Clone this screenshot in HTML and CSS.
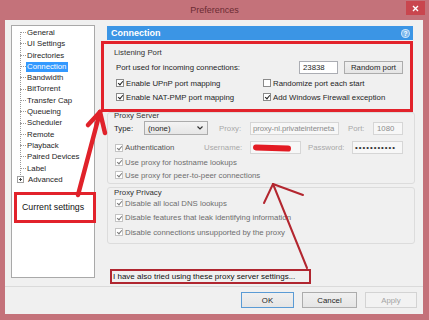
FILE: index.html
```html
<!DOCTYPE html>
<html lang="en">
<head>
    <meta charset="UTF-8">
    <title>Preferences</title>
    <link rel="stylesheet" href="styles.css">
</head>
<body>
    <div class="window">
        <div class="titlebar">
            <span></span>
            <span class="title">Preferences</span>
            <span class="close">
                <svg width="7" height="7" viewBox="0 0 7 7"><path d="M1 1L6 6M6 1L1 6" stroke="#fff" stroke-width="1.4"/></svg>
            </span>
        </div>

        <div class="client">
            <div class="top">
                <div class="sidebar">
                    <ul class="tree">
                        <li>General</li>
                        <li>UI Settings</li>
                        <li>Directories</li>
                        <li class="selected"><span>Connection</span></li>
                        <li>Bandwidth</li>
                        <li>BitTorrent</li>
                        <li>Transfer Cap</li>
                        <li>Queueing</li>
                        <li>Scheduler</li>
                        <li>Remote</li>
                        <li>Playback</li>
                        <li>Paired Devices</li>
                        <li>Label</li>
                        <li class="expand"><i class="plus"></i>Advanced</li>
                    </ul>
                    <div class="note-big">Current settings</div>
                </div>

                <div class="main">
                    <div class="panel-head">
                        <span>Connection</span>
                        <span class="help">?</span>
                    </div>

                    <div class="highlight">
                        <div class="group-label">Listening Port</div>
                        <div class="port-row">
                            <span class="port-text">Port used for incoming connections:</span>
                            <span class="field port">23838</span>
                            <span class="btn random">Random port</span>
                        </div>
                        <div class="check-grid">
                            <span class="check on"><i class="box"></i>Enable UPnP port mapping</span>
                            <span class="check"><i class="box"></i>Randomize port each start</span>
                            <span class="check on"><i class="box"></i>Enable NAT-PMP port mapping</span>
                            <span class="check on"><i class="box"></i>Add Windows Firewall exception</span>
                        </div>
                    </div>

                    <div class="group proxy">
                        <div class="group-label">Proxy Server</div>
                        <div class="row type-row">
                            <span class="lbl type">Type:</span>
                            <span class="select">(none)
                                <svg width="6" height="4" viewBox="0 0 6 4"><path d="M0.5 0.5L3 3L5.5 0.5" fill="none" stroke="#333" stroke-width="1.2"/></svg>
                            </span>
                            <span class="lbl dim proxy-lbl">Proxy:</span>
                            <span class="field off host">proxy-nl.privateinterneta</span>
                            <span class="lbl dim port-lbl">Port:</span>
                            <span class="field off num">1080</span>
                        </div>
                        <div class="row auth-row">
                            <span class="check on off auth"><i class="box"></i>Authentication</span>
                            <span class="lbl dim user-lbl">Username:</span>
                            <span class="field off user"><i class="scribble"></i></span>
                            <span class="lbl dim pass-lbl">Password:</span>
                            <span class="field off pass">•••••••••••</span>
                        </div>
                        <div class="row"><span class="check on off"><i class="box"></i>Use proxy for hostname lookups</span></div>
                        <div class="row last"><span class="check on off"><i class="box"></i>Use proxy for peer-to-peer connections</span></div>
                    </div>

                    <div class="group privacy">
                        <div class="group-label">Proxy Privacy</div>
                        <div class="privacy-list">
                            <span class="check on off"><i class="box"></i>Disable all local DNS lookups</span>
                            <span class="check on off"><i class="box"></i>Disable features that leak identifying information</span>
                            <span class="check on off"><i class="box"></i>Disable connections unsupported by the proxy</span>
                        </div>
                    </div>

                    <div class="note-small">I have also tried using these proxy server settings...</div>
                </div>
            </div>

            <div class="sep"></div>

            <div class="buttons">
                <span class="btn default">OK</span>
                <span class="btn cancel">Cancel</span>
                <span class="btn disabled">Apply</span>
            </div>
        </div>

        <!-- annotation arrows drawn over the dialog -->
        <svg class="marks" width="429" height="320" viewBox="0 0 429 320">
            <g fill="none" stroke="#e0222a" stroke-width="4.5" stroke-linecap="round" stroke-linejoin="round">
                <path d="M78 195 L100 112"/>
                <path d="M100 112 L88 125"/>
                <path d="M100 112 L105 133"/>
            </g>
            <g fill="none" stroke="#b3262f" stroke-width="2" stroke-linecap="round">
                <path d="M307 268 L273 184"/>
                <path d="M273 184 L264 203"/>
                <path d="M273 184 L303 195"/>
            </g>
        </svg>
    </div>
</body>
</html>
```

FILE: styles.css
```css
* {
    margin: 0;
    padding: 0;
    box-sizing: border-box;
}

body {
    width: 429px;
    height: 320px;
    overflow: hidden;
    background: #c4727a;
    font-family: 'Liberation Sans', Arial, sans-serif;
    font-size: 7.8px;
    color: #1e1e1e;
}

.window {
    position: relative;
    height: 320px;
    display: flex;
    flex-direction: column;
}

.titlebar {
    height: 20px;
    display: grid;
    grid-template-columns: 1fr auto 1fr;
    align-items: start;
}

.title {
    font-size: 9px;
    line-height: 20px;
    color: #6a2b33;
}

.close {
    justify-self: end;
    width: 19px;
    height: 14px;
    margin: 1px 4px 0 0;
    background: #c9464e;
    display: flex;
    align-items: center;
    justify-content: center;
}

.client {
    flex: 1;
    margin: 0 6px 6px 5px;
    background: #f0f0f0;
    padding: 5px 6px 6px 6px;
    display: flex;
    flex-direction: column;
}

.top {
    display: flex;
    align-items: flex-start;
    height: 259px;
}

/* tree */

.sidebar {
    width: 84px;
    height: 253px;
    background: #fff;
    border: 1px solid #a9a9a9;
    padding-top: 1px;
}

.tree {
    list-style: none;
    margin-left: 8px;
    background: repeating-linear-gradient(to bottom, #9a9a9a 0 1px, transparent 1px 2px) no-repeat 0 5px / 1px calc(100% - 11px);
}

.tree li {
    height: 11.3px;
    line-height: 11.3px;
    display: flex;
    align-items: center;
    white-space: nowrap;
}

.tree li::before {
    content: "";
    width: 6px;
    border-top: 1px dotted #9a9a9a;
    margin-right: 1px;
}

.tree li.expand::before {
    display: none;
}

.tree .plus {
    width: 7px;
    height: 7px;
    margin: 0 4px 0 -3px;
    border: 1px solid #a0a0a0;
    background:
        linear-gradient(#444, #444) center / 3px 1px no-repeat,
        linear-gradient(#444, #444) center / 1px 3px no-repeat,
        #fff;
}

.tree li.selected span {
    background: #3399ff;
    color: #fff;
    padding: 0 2px 0 1px;
    margin-left: -1px;
    line-height: 10px;
}

.note-big {
    margin: 7px 0 0 2px;
    width: 82px;
    height: 31px;
    border: 3px solid #e2222b;
    padding-left: 5px;
    line-height: 25px;
    font-size: 8.8px;
    color: #111;
    white-space: nowrap;
}

/* right panel */

.main {
    width: 308px;
    margin-left: 12px;
}

.panel-head {
    margin: 1px 2px 0 0;
    height: 14px;
    background: #3b95e5;
    color: #fff;
    font-weight: bold;
    font-size: 9px;
    padding: 0 3px 0 4px;
    display: flex;
    align-items: center;
    justify-content: space-between;
}

.help {
    width: 9px;
    height: 9px;
    border-radius: 50%;
    background: rgba(255, 255, 255, 0.35);
    border: 1px solid rgba(255, 255, 255, 0.6);
    font-size: 6.5px;
    line-height: 7px;
    text-align: center;
}

.highlight {
    margin: 1px 2px 0 -6px;
    height: 71px;
    border: 3px solid #e2222b;
    padding: 4px 7px 0 10px;
}

.group-label {
    line-height: 10px;
    color: #333;
    white-space: nowrap;
}

.port-row {
    margin-top: 3px;
    height: 13px;
    padding-left: 2px;
    display: flex;
    align-items: center;
}

.port-text {
    flex: 1;
    white-space: nowrap;
}

.field {
    height: 13px;
    border: 1px solid #abadb3;
    background: #fff;
    padding-left: 3px;
    line-height: 11px;
    white-space: nowrap;
    overflow: hidden;
}

.field.port {
    width: 39px;
    margin-right: 6px;
}

.btn {
    height: 13px;
    border: 1px solid #acacac;
    background: linear-gradient(#f0f0f0, #e5e5e5);
    display: flex;
    align-items: center;
    justify-content: center;
    color: #1e1e1e;
}

.btn.random {
    width: 59px;
}

.check-grid {
    margin-top: 3px;
    padding-left: 2px;
    display: grid;
    grid-template-columns: 147px 1fr;
    row-gap: 2px;
}

.check {
    height: 12px;
    display: flex;
    align-items: center;
    gap: 2px;
    white-space: nowrap;
}

.box {
    position: relative;
    width: 8px;
    height: 8px;
    border: 1px solid #8a8a8a;
    background: #fff;
    flex: none;
}

.check.on .box::after {
    content: "";
    position: absolute;
    left: 2px;
    top: 0;
    width: 2px;
    height: 4px;
    border: solid #222;
    border-width: 0 1.3px 1.3px 0;
    transform: rotate(40deg);
}

.check.off {
    color: #6e6e6e;
}

.check.off .box {
    border-color: #c4c4c4;
}

.check.off .box::after {
    border-color: #7a7a7a;
}

/* group boxes */

.group {
    border: 1px solid #dcdcdc;
    border-radius: 3px;
    padding-left: 6px;
}

.proxy {
    height: 72px;
}

.proxy .group-label {
    line-height: 6px;
}

.row {
    display: flex;
    align-items: center;
    height: 12px;
    margin-top: 2px;
}

.row .check {
    margin-left: 1px;
}

.row.last {
    margin-top: 1px;
}

.type-row {
    height: 14px;
    margin-top: 2px;
}

.auth-row {
    height: 13px;
    margin-top: 6px;
}

.lbl {
    white-space: nowrap;
}

.lbl.dim {
    color: #a8a8a8;
}

.lbl.type {
    width: 30px;
}

.select {
    width: 64px;
    height: 14px;
    border: 1px solid #acacac;
    background: linear-gradient(#f3f3f3, #e6e6e6);
    display: flex;
    align-items: center;
    justify-content: space-between;
    padding: 0 4px 0 3px;
}

.proxy-lbl {
    width: 31px;
    margin-left: 11px;
}

.field.off {
    background: #f7f7f7;
    border-color: #d6d6d6;
    color: #8c8c8c;
}

.field.host {
    width: 89px;
    padding-left: 2px;
    letter-spacing: -0.1px;
}

.port-lbl {
    width: 25px;
    margin-left: 9px;
}

.field.num {
    width: 30px;
}

.check.auth {
    width: 89px;
    color: #555;
}

.user-lbl {
    width: 46px;
}

.field.user {
    width: 51px;
    position: relative;
}

.scribble {
    position: absolute;
    left: 2px;
    top: 3px;
    width: 38px;
    height: 6px;
    border-radius: 4px;
    background: #e31b23;
    transform: rotate(2deg);
}

.pass-lbl {
    width: 44px;
    margin-left: 7px;
}

.field.pass {
    width: 51px;
    color: #333;
    letter-spacing: 1px;
    padding-left: 2px;
}

.privacy {
    margin-top: 3px;
    height: 57px;
}

.privacy .group-label {
    line-height: 9px;
}

.privacy-list {
    display: flex;
    flex-direction: column;
    gap: 2.5px;
    padding-left: 1px;
}

.note-small {
    margin: 25px 0 0 3px;
    width: 201px;
    height: 15px;
    border: 2px solid #b02630;
    padding-left: 1px;
    line-height: 11px;
    font-size: 8px;
    color: #111;
    white-space: nowrap;
}

/* footer */

.sep {
    margin: 2px -6px 0;
    height: 1px;
    background: #dadada;
}

.buttons {
    margin-top: 5px;
    display: flex;
    justify-content: flex-end;
    gap: 8px;
}

.buttons .btn {
    height: 16px;
}

.btn.default {
    width: 53px;
    border-color: #5a9bd5;
}

.btn.cancel {
    width: 55px;
}

.btn.disabled {
    width: 52px;
    border-color: #d3d3d3;
    background: #f2f2f2;
    color: #a3a3a3;
}

.marks {
    position: absolute;
    left: 0;
    top: 0;
    pointer-events: none;
}
```
